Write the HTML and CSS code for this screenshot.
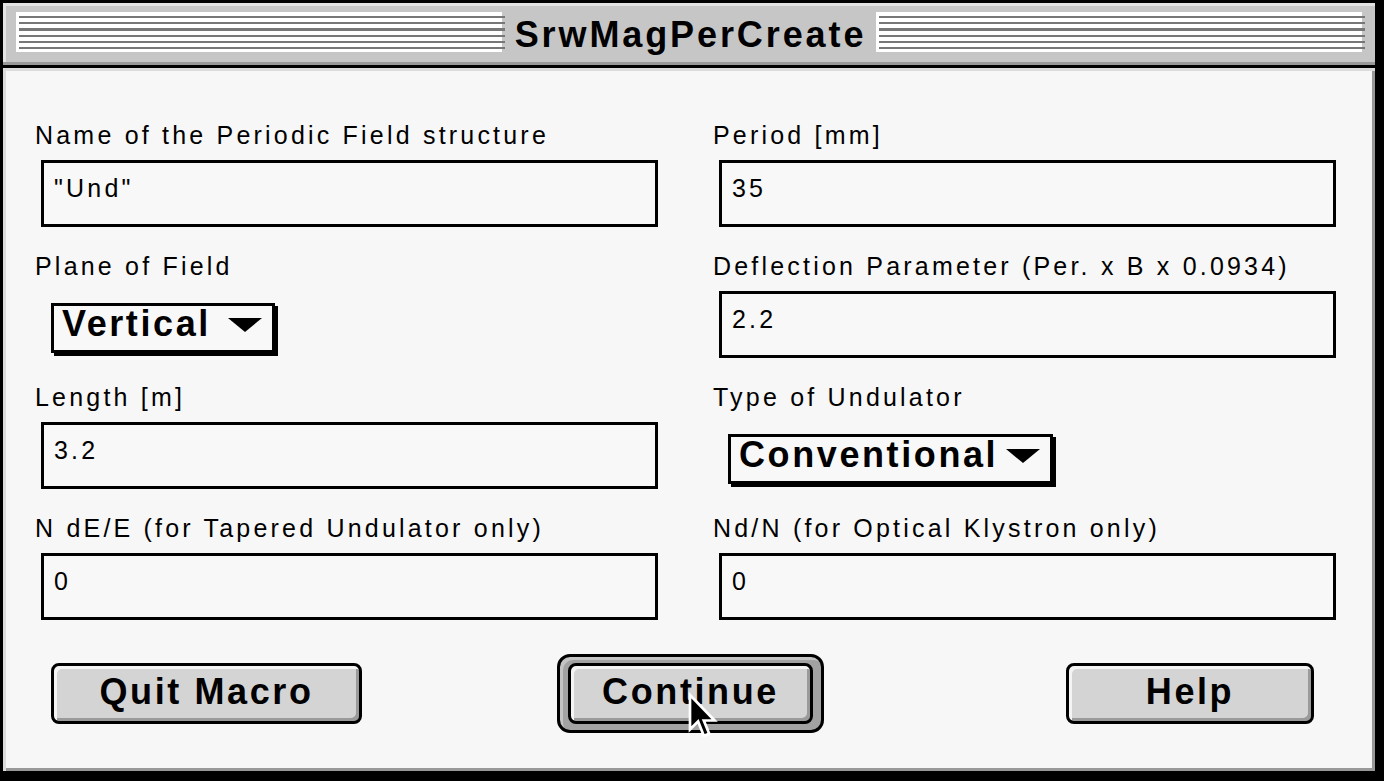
FILE: index.html
```html
<!DOCTYPE html>
<html>
<head>
<meta charset="utf-8">
<title>SrwMagPerCreate</title>
<link rel="stylesheet" href="styles.css">
</head>
<body>
<div class="window">
  <div class="titlebar">
    <div class="stripes"></div>
    <div class="title">SrwMagPerCreate</div>
    <div class="stripes"></div>
  </div>
  <div class="content">
    <div class="grid">
      <div class="cell">
        <div class="label">Name of the Periodic Field structure</div>
        <div class="field">"Und"</div>
      </div>
      <div class="cell">
        <div class="label">Period [mm]</div>
        <div class="field">35</div>
      </div>
      <div class="cell">
        <div class="label">Plane of Field</div>
        <div class="popup popup-plane"><span>Vertical</span><span class="arrow"></span></div>
      </div>
      <div class="cell">
        <div class="label">Deflection Parameter (Per. x B x 0.0934)</div>
        <div class="field">2.2</div>
      </div>
      <div class="cell">
        <div class="label">Length [m]</div>
        <div class="field">3.2</div>
      </div>
      <div class="cell">
        <div class="label">Type of Undulator</div>
        <div class="popup popup-type"><span>Conventional</span><span class="arrow"></span></div>
      </div>
      <div class="cell">
        <div class="label">N dE/E (for Tapered Undulator only)</div>
        <div class="field">0</div>
      </div>
      <div class="cell">
        <div class="label">Nd/N (for Optical Klystron only)</div>
        <div class="field">0</div>
      </div>
    </div>
    <div class="buttons">
      <div class="btn btn-quit">Quit Macro</div>
      <div class="default-ring"><div class="btn btn-continue">Continue</div></div>
      <div class="btn btn-help">Help</div>
    </div>
    <svg class="cursor" width="33" height="51" viewBox="0 0 11 17">
      <polygon points="1,1 1,12.5 3.7,9.8 5.6,14.6 7.4,13.9 5.6,9.5 9.2,9.5" fill="#000" stroke="#fff" stroke-width="0.9" stroke-linejoin="miter"/>
    </svg>
  </div>
</div>
</body>
</html>
```

FILE: styles.css
```css
html, body {
  margin: 0;
  padding: 0;
}
body {
  width: 1384px;
  height: 781px;
  background: #000;
  overflow: hidden;
  font-family: "Liberation Sans", Arial, sans-serif;
  color: #000;
}
.window {
  margin: 3px 9px 10px 3px;
  width: 1372px;
  height: 768px;
  display: flex;
  flex-direction: column;
}
.titlebar {
  box-sizing: border-box;
  height: 62px;
  background: #c6c6c6;
  border-bottom: 3px solid #999;
  box-shadow: inset 3px 3px 0 #e2e2e2;
  display: flex;
  align-items: flex-start;
  padding: 9px 10px 0 13px;
}
.stripes {
  flex: 1;
  height: 40px;
  background:
    repeating-linear-gradient(to bottom, transparent 0 4px, #777 4px 6.2px) 3px 0 / calc(100% - 3px) 37px no-repeat,
    linear-gradient(#fff, #fff) 0 0 / calc(100% - 3px) 40px no-repeat;
}
.title {
  font-weight: bold;
  font-size: 36px;
  letter-spacing: 2.9px;
  line-height: 40px;
  margin-top: 3px;
  padding: 0 10px 0 10px;
  white-space: nowrap;
}
.content {
  position: relative;
  flex: 1;
  background: #f7f7f7;
  border-top: 3px solid #000;
  box-shadow: inset 3px 3px 0 #dcdcdc, inset -3px -3px 0 #999;
  padding: 52px 0 0 32px;
}
.grid {
  display: grid;
  grid-template-columns: 678px 1fr;
  row-gap: 24px;
}
.cell {
  display: flex;
  flex-direction: column;
  align-items: flex-start;
}
.label {
  font-size: 25px;
  letter-spacing: 3.2px;
  line-height: 30px;
  height: 30px;
  white-space: nowrap;
  margin-bottom: 10px;
}
.field {
  box-sizing: border-box;
  width: 617px;
  height: 67px;
  margin-left: 6px;
  border: 3px solid #000;
  background: #f8f8f8;
  font-size: 25px;
  letter-spacing: 3.2px;
  line-height: 30px;
  padding: 10px 0 0 10px;
}
.popup {
  box-sizing: border-box;
  height: 50px;
  margin-top: 12px;
  margin-left: 16px;
  border: 3px solid #000;
  background: #f8f8f8;
  box-shadow: 3px 3px 0 #000;
  display: flex;
  justify-content: space-between;
  align-items: flex-start;
  padding: 0 10px 0 8px;
  font-weight: bold;
  font-size: 36px;
  letter-spacing: 2.6px;
  line-height: 36px;
  white-space: nowrap;
}
.popup-plane { width: 224px; }
.popup-type { width: 325px; margin-left: 15px; }
.arrow {
  width: 0;
  height: 0;
  margin-top: 12px;
  border-left: 17px solid transparent;
  border-right: 17px solid transparent;
  border-top: 14px solid #000;
}
.buttons {
  display: flex;
  align-items: center;
  margin-top: 34px;
  padding-left: 16px;
}
.btn {
  box-sizing: border-box;
  height: 61px;
  border: 3px solid #000;
  border-radius: 8px;
  background: #d4d4d4;
  box-shadow: inset 3px 3px 0 #f4f4f4, inset -3px -3px 0 #9a9a9a;
  font-weight: bold;
  font-size: 36px;
  letter-spacing: 2.6px;
  line-height: 51px;
  padding-bottom: 4px;
  text-align: center;
  white-space: nowrap;
}
.btn-quit { width: 311px; }
.btn-continue { width: 245px; }
.btn-help { width: 248px; margin-left: 242px; }
.default-ring {
  margin-left: 195px;
  border: 3px solid #000;
  border-radius: 13px;
  padding: 6px 8px;
  background: #a2a2a2;
  box-shadow: inset 3px 3px 0 #c4c4c4;
}
.cursor {
  position: absolute;
  left: 684px;
  top: 624px;
}
```
